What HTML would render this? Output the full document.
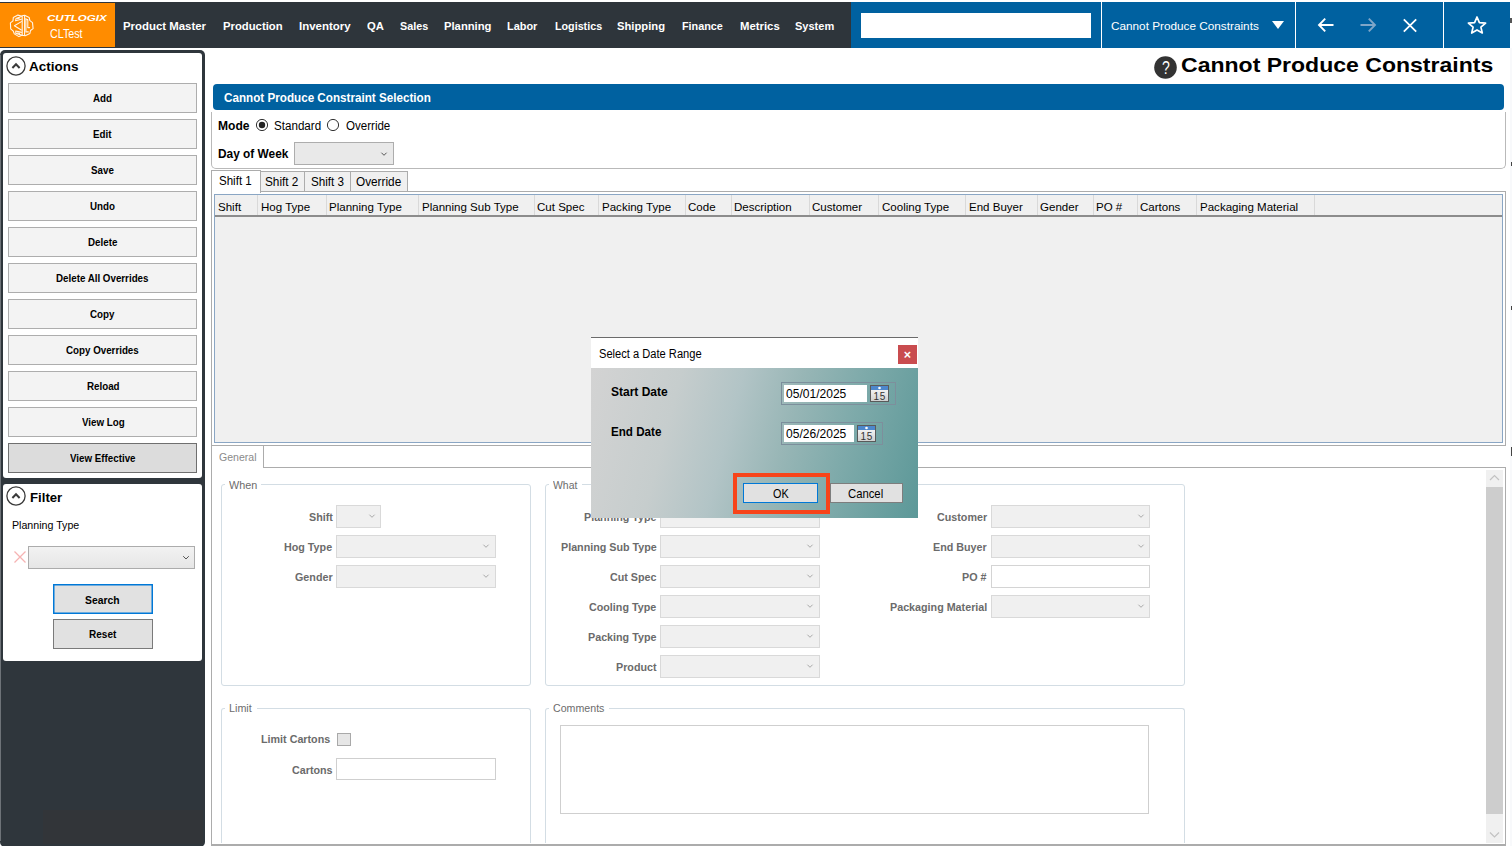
<!DOCTYPE html><html><head><meta charset="utf-8"><style>
*{margin:0;padding:0;box-sizing:border-box}
html,body{width:1512px;height:846px;overflow:hidden;background:#fff;position:relative;font-family:"Liberation Sans",sans-serif}
.a{position:absolute}
.t{position:absolute;white-space:nowrap;transform-origin:0 0;font-family:"Liberation Sans",sans-serif}
svg{position:absolute;overflow:visible}
</style></head><body>
<div class="a " style="left:0px;top:2px;width:851px;height:46px;background:#2e353b"></div>
<div class="a " style="left:0px;top:3px;width:115px;height:44px;background:#ff8c00"></div>
<div class="a " style="left:851px;top:2px;width:659px;height:46px;background:#0061a0"></div>
<div class="a " style="left:1101px;top:2px;width:1px;height:46px;background:#fff"></div>
<div class="a " style="left:1295px;top:2px;width:1px;height:46px;background:#fff"></div>
<div class="a " style="left:1443px;top:2px;width:1px;height:46px;background:#fff"></div>
<div class="a " style="left:861px;top:12.5px;width:229.5px;height:25.5px;background:#fff"></div>
<div class="a " style="left:1510px;top:17.5px;width:2px;height:5.0px;background:#555"></div>
<svg style="left:10px;top:14px" width="24" height="24" viewBox="0 0 24 24" fill="none" stroke="#fff" stroke-width="1.1" stroke-linejoin="round" stroke-linecap="round" opacity="0.92">
<path d="M3.3 3.6 L7.9 1.1 L11.2 2 L14.6 1.2 L19.2 3.6 L19.9 6.6 L22.5 8.6 L23.1 14.6 L20.5 16.5 L19.9 19.5 L15.2 21.8 L11.9 21.2 L8.9 22.6 L4.3 19.9 L3.3 17.2 L0.7 14.9 L0.4 8.9 L3 6.9 Z"/>
<path d="M12.2 2.2 L12.2 21 M14.6 1.6 L14.6 21.4"/>
<path d="M11.4 2.6 L6 4.6 L5.6 6.8 L11.3 5.2 M11.4 7.6 L4.4 11.8 L11.3 16 M11.4 18.4 L5.8 17 L5.8 19.4 L11.4 21"/>
<path d="M7.2 4.7 L9.5 4 M7.4 19 L9.6 19.4"/>
<path d="M15.9 4.2 L15.9 17.9 L18.3 17.9 M17 5.6 L17.8 5.6 L17.8 13.6 L19.6 13.6"/>
</svg>
<span class="t" style="left:47.00px;top:14px;font-size:9.3px;line-height:9.3px;color:#fff;font-weight:700;font-style:italic;transform:scaleX(1.2451);">CUTLOGIX</span>
<span class="t" style="left:50.00px;top:28px;font-size:12.4px;line-height:12.4px;color:#fff;transform:scaleX(0.8639);">CLTest</span>
<span class="t" style="left:123.30px;top:20px;font-size:11.6px;line-height:11.6px;color:#fff;font-weight:700;transform:scaleX(0.9837);">Product Master</span>
<span class="t" style="left:223.30px;top:20px;font-size:11.6px;line-height:11.6px;color:#fff;font-weight:700;transform:scaleX(0.9738);">Production</span>
<span class="t" style="left:298.90px;top:20px;font-size:11.6px;line-height:11.6px;color:#fff;font-weight:700;transform:scaleX(0.9898);">Inventory</span>
<span class="t" style="left:366.90px;top:20px;font-size:11.6px;line-height:11.6px;color:#fff;font-weight:700;transform:scaleX(0.9713);">QA</span>
<span class="t" style="left:400.00px;top:20px;font-size:11.6px;line-height:11.6px;color:#fff;font-weight:700;transform:scaleX(0.9313);">Sales</span>
<span class="t" style="left:444.00px;top:20px;font-size:11.6px;line-height:11.6px;color:#fff;font-weight:700;transform:scaleX(0.9699);">Planning</span>
<span class="t" style="left:507.40px;top:20px;font-size:11.6px;line-height:11.6px;color:#fff;font-weight:700;transform:scaleX(0.9421);">Labor</span>
<span class="t" style="left:554.70px;top:20px;font-size:11.6px;line-height:11.6px;color:#fff;font-weight:700;transform:scaleX(0.9258);">Logistics</span>
<span class="t" style="left:617.40px;top:20px;font-size:11.6px;line-height:11.6px;color:#fff;font-weight:700;transform:scaleX(0.9676);">Shipping</span>
<span class="t" style="left:681.80px;top:20px;font-size:11.6px;line-height:11.6px;color:#fff;font-weight:700;transform:scaleX(0.9332);">Finance</span>
<span class="t" style="left:739.70px;top:20px;font-size:11.6px;line-height:11.6px;color:#fff;font-weight:700;transform:scaleX(0.9789);">Metrics</span>
<span class="t" style="left:795.10px;top:20px;font-size:11.6px;line-height:11.6px;color:#fff;font-weight:700;transform:scaleX(0.9502);">System</span>
<span class="t" style="left:1111.00px;top:20px;font-size:11.6px;line-height:11.6px;color:#fff;transform:scaleX(1.0147);">Cannot Produce Constraints</span>
<svg style="left:1272px;top:21px" width="12" height="8" viewBox="0 0 12 8"><path d="M0 0 L12 0 L6 8 Z" fill="#fff"/></svg>
<svg style="left:1317px;top:17px" width="18" height="16" viewBox="0 0 18 16" fill="none" stroke="#fff" stroke-width="1.9"><path d="M2 8 L16.5 8 M8.2 1.6 L2 8 L8.2 14.4"/></svg>
<svg style="left:1359px;top:17px" width="18" height="16" viewBox="0 0 18 16" fill="none" stroke="#7fa6c8" stroke-width="1.9"><path d="M1.5 8 L16 8 M9.8 1.6 L16 8 L9.8 14.4"/></svg>
<svg style="left:1402px;top:18px" width="16" height="15" viewBox="0 0 16 15" fill="none" stroke="#fff" stroke-width="1.8"><path d="M1.8 1.4 L14.2 13.6 M14.2 1.4 L1.8 13.6"/></svg>
<svg style="left:1467px;top:16px" width="20" height="18" viewBox="0 0 20 18" fill="none" stroke="#fff" stroke-width="1.7" stroke-linejoin="round"><path d="M10 1 L12.4 6.6 L18.6 7.1 L13.9 11.1 L15.3 17 L10 13.9 L4.7 17 L6.1 11.1 L1.4 7.1 L7.6 6.6 Z"/></svg>
<div class="a " style="left:0px;top:50px;width:205px;height:796.5px;background:#2f363c;border-radius:5px"></div>
<div class="a " style="left:43px;top:809.5px;width:160px;height:34.5px;background:#323539"></div>
<div class="a " style="left:0px;top:55px;width:1px;height:786px;background:#6e7378"></div>
<div class="a " style="left:3px;top:53px;width:199px;height:425px;background:#fff;border-radius:3px"></div>
<div class="a " style="left:3px;top:484px;width:199px;height:177px;background:#fff;border-radius:3px"></div>
<svg style="left:5.699999999999999px;top:55.5px" width="20" height="20" viewBox="0 0 20 20" fill="none"><circle cx="10" cy="10" r="9.1" stroke="#3a3a3a" stroke-width="1.3"/><path d="M6.4 12 L10 8.3 L13.6 12" stroke="#3a3a3a" stroke-width="2"/></svg>
<span class="t" style="left:29.40px;top:60px;font-size:13.4px;line-height:13.4px;color:#000;font-weight:700;transform:scaleX(1.0071);">Actions</span>
<div class="a " style="left:8px;top:83px;width:189px;height:30px;background:#f3f3f3;border:1px solid #adadad"></div>
<span class="t" style="left:93.47px;top:94px;font-size:10.4px;line-height:10.4px;color:#000;font-weight:700;transform:scaleX(0.9400);">Add</span>
<div class="a " style="left:8px;top:119px;width:189px;height:30px;background:#f3f3f3;border:1px solid #adadad"></div>
<span class="t" style="left:93.32px;top:130px;font-size:10.4px;line-height:10.4px;color:#000;font-weight:700;transform:scaleX(0.9400);">Edit</span>
<div class="a " style="left:8px;top:155px;width:189px;height:30px;background:#f3f3f3;border:1px solid #adadad"></div>
<span class="t" style="left:91.29px;top:166px;font-size:10.4px;line-height:10.4px;color:#000;font-weight:700;transform:scaleX(0.9400);">Save</span>
<div class="a " style="left:8px;top:191px;width:189px;height:30px;background:#f3f3f3;border:1px solid #adadad"></div>
<span class="t" style="left:90.49px;top:202px;font-size:10.4px;line-height:10.4px;color:#000;font-weight:700;transform:scaleX(0.9400);">Undo</span>
<div class="a " style="left:8px;top:227px;width:189px;height:30px;background:#f3f3f3;border:1px solid #adadad"></div>
<span class="t" style="left:88.04px;top:238px;font-size:10.4px;line-height:10.4px;color:#000;font-weight:700;transform:scaleX(0.9400);">Delete</span>
<div class="a " style="left:8px;top:263px;width:189px;height:30px;background:#f3f3f3;border:1px solid #adadad"></div>
<span class="t" style="left:56.28px;top:274px;font-size:10.4px;line-height:10.4px;color:#000;font-weight:700;transform:scaleX(0.9400);">Delete All Overrides</span>
<div class="a " style="left:8px;top:299px;width:189px;height:30px;background:#f3f3f3;border:1px solid #adadad"></div>
<span class="t" style="left:90.49px;top:310px;font-size:10.4px;line-height:10.4px;color:#000;font-weight:700;transform:scaleX(0.9400);">Copy</span>
<div class="a " style="left:8px;top:335px;width:189px;height:30px;background:#f3f3f3;border:1px solid #adadad"></div>
<span class="t" style="left:66.33px;top:346px;font-size:10.4px;line-height:10.4px;color:#000;font-weight:700;transform:scaleX(0.9400);">Copy Overrides</span>
<div class="a " style="left:8px;top:371px;width:189px;height:30px;background:#f3f3f3;border:1px solid #adadad"></div>
<span class="t" style="left:86.68px;top:382px;font-size:10.4px;line-height:10.4px;color:#000;font-weight:700;transform:scaleX(0.9400);">Reload</span>
<div class="a " style="left:8px;top:407px;width:189px;height:30px;background:#f3f3f3;border:1px solid #adadad"></div>
<span class="t" style="left:81.62px;top:418px;font-size:10.4px;line-height:10.4px;color:#000;font-weight:700;transform:scaleX(0.9400);">View Log</span>
<div class="a " style="left:8px;top:443px;width:189px;height:30px;background:#dcdcdc;border:1px solid #6f6f6f"></div>
<span class="t" style="left:69.94px;top:454px;font-size:10.4px;line-height:10.4px;color:#000;font-weight:700;transform:scaleX(0.9400);">View Effective</span>
<svg style="left:5.699999999999999px;top:486.4px" width="20" height="20" viewBox="0 0 20 20" fill="none"><circle cx="10" cy="10" r="9.1" stroke="#3a3a3a" stroke-width="1.3"/><path d="M6.4 12 L10 8.3 L13.6 12" stroke="#3a3a3a" stroke-width="2"/></svg>
<span class="t" style="left:29.80px;top:491px;font-size:13.4px;line-height:13.4px;color:#000;font-weight:700;transform:scaleX(0.9843);">Filter</span>
<span class="t" style="left:11.80px;top:520px;font-size:11.2px;line-height:11.2px;color:#000;transform:scaleX(0.9507);">Planning Type</span>
<svg style="left:13px;top:550px" width="14" height="14" viewBox="0 0 14 14" fill="none" stroke="#f6b3b3" stroke-width="1.3"><path d="M1.5 1.5 L12.5 12.5 M12.5 1.5 L1.5 12.5"/></svg>
<div class="a " style="left:28px;top:546px;width:167px;height:23px;background:linear-gradient(#f2f2f2,#e6e6e6);border:1px solid #acacac"></div>
<svg style="left:181.5px;top:555px" width="8" height="6" viewBox="0 0 8 6" fill="none" stroke="#555" stroke-width="1"><path d="M1.2 1.2 L4 4 L6.8 1.2"/></svg>
<div class="a " style="left:53px;top:584px;width:100px;height:30px;background:#e1e1e1;border:1px solid #0078d7;box-shadow:inset 0 0 0 0.5px #0078d7"></div>
<span class="t" style="left:85.40px;top:595px;font-size:11.3px;line-height:11.3px;color:#000;font-weight:700;transform:scaleX(0.9158);">Search</span>
<div class="a " style="left:53px;top:619px;width:100px;height:30px;background:#e1e1e1;border:1px solid #7a7a7a"></div>
<span class="t" style="left:88.95px;top:629px;font-size:11.3px;line-height:11.3px;color:#000;font-weight:700;transform:scaleX(0.8869);">Reset</span>
<svg style="left:1154px;top:56px" width="23" height="23" viewBox="0 0 23 23"><circle cx="11.5" cy="11.5" r="11.3" fill="#333"/></svg>
<span class="t" style="left:1161.60px;top:59px;font-size:18.5px;line-height:18.5px;color:#fff;transform:scaleX(0.7600);">?</span>
<span class="t" style="left:1181.30px;top:56px;font-size:19.8px;line-height:19.8px;color:#000;font-weight:700;transform:scaleX(1.1642);">Cannot Produce Constraints</span>
<div class="a " style="left:213px;top:84px;width:1291px;height:26px;background:#0061a0;border-radius:4px"></div>
<span class="t" style="left:223.60px;top:92px;font-size:12.2px;line-height:12.2px;color:#fff;font-weight:700;transform:scaleX(0.9575);">Cannot Produce Constraint Selection</span>
<div class="a " style="left:211px;top:110px;width:1294.5px;height:58.5px;border:1px solid #b9b9b9;border-top:none;border-bottom-left-radius:5px;border-bottom-right-radius:5px;background:#fff"></div>
<div class="a " style="left:211px;top:110px;width:1.5px;height:2px;background:#fff"></div>
<div class="a " style="left:1504.5px;top:110px;width:1.0px;height:2px;background:#fff"></div>
<span class="t" style="left:217.80px;top:120px;font-size:12px;line-height:12px;color:#000;font-weight:700;transform:scaleX(1.0045);">Mode</span>
<svg style="left:255px;top:118px" width="14" height="14" viewBox="0 0 14 14"><circle cx="7" cy="7" r="5.6" fill="#fff" stroke="#333" stroke-width="1"/><circle cx="7" cy="7" r="3.2" fill="#222"/></svg>
<span class="t" style="left:274.10px;top:120px;font-size:12px;line-height:12px;color:#000;transform:scaleX(0.9682);">Standard</span>
<svg style="left:325.8px;top:118px" width="14" height="14" viewBox="0 0 14 14"><circle cx="7" cy="7" r="5.6" fill="#fff" stroke="#333" stroke-width="1"/></svg>
<span class="t" style="left:345.70px;top:120px;font-size:12px;line-height:12px;color:#000;transform:scaleX(0.9625);">Override</span>
<span class="t" style="left:217.80px;top:148px;font-size:12px;line-height:12px;color:#000;font-weight:700;transform:scaleX(0.9893);">Day of Week</span>
<div class="a " style="left:294px;top:142px;width:100px;height:23px;background:#e9e9e9;border:1px solid #adadad"></div>
<svg style="left:379px;top:149.5px" width="10" height="8" viewBox="0 0 10 8" fill="none" stroke="#555" stroke-width="1"><path d="M2.4 2.7 L5 5.3 L7.6 2.7"/></svg>
<div class="a " style="left:211px;top:191.3px;width:1294.5px;height:254.7px;border:1px solid #acacac;background:#fff"></div>
<div class="a " style="left:260px;top:171.4px;width:44.5px;height:20.6px;background:#f0f0f0;border:1px solid #acacac"></div>
<div class="a " style="left:304px;top:171.4px;width:46.5px;height:20.6px;background:#f0f0f0;border:1px solid #acacac"></div>
<div class="a " style="left:350px;top:171.4px;width:58px;height:20.6px;background:#f0f0f0;border:1px solid #acacac"></div>
<div class="a " style="left:211px;top:169.7px;width:50px;height:22.9px;background:#fff;border:1px solid #acacac;border-bottom:none"></div>
<span class="t" style="left:219.20px;top:175px;font-size:12.4px;line-height:12.4px;color:#000;transform:scaleX(0.9309);">Shift 1</span>
<span class="t" style="left:264.70px;top:176px;font-size:12.4px;line-height:12.4px;color:#000;transform:scaleX(0.9507);">Shift 2</span>
<span class="t" style="left:310.50px;top:176px;font-size:12.4px;line-height:12.4px;color:#000;transform:scaleX(0.9422);">Shift 3</span>
<span class="t" style="left:356.00px;top:176px;font-size:12.4px;line-height:12.4px;color:#000;transform:scaleX(0.9513);">Override</span>
<div class="a " style="left:214.2px;top:194px;width:1288.6px;height:249px;border:1px solid #8aa6c4;background:#f0f0f0"></div>
<div class="a " style="left:215.2px;top:214.5px;width:1286.6px;height:2.0px;background:#8c8c8c"></div>
<div class="a " style="left:257px;top:195px;width:1px;height:19.5px;background:#d9d9d9"></div>
<div class="a " style="left:326px;top:195px;width:1px;height:19.5px;background:#d9d9d9"></div>
<div class="a " style="left:417.8px;top:195px;width:1.0px;height:19.5px;background:#d9d9d9"></div>
<div class="a " style="left:533.7px;top:195px;width:1.0px;height:19.5px;background:#d9d9d9"></div>
<div class="a " style="left:598px;top:195px;width:1px;height:19.5px;background:#d9d9d9"></div>
<div class="a " style="left:685px;top:195px;width:1px;height:19.5px;background:#d9d9d9"></div>
<div class="a " style="left:731px;top:195px;width:1px;height:19.5px;background:#d9d9d9"></div>
<div class="a " style="left:808.7px;top:195px;width:1.0px;height:19.5px;background:#d9d9d9"></div>
<div class="a " style="left:878.4px;top:195px;width:1.0px;height:19.5px;background:#d9d9d9"></div>
<div class="a " style="left:965px;top:195px;width:1px;height:19.5px;background:#d9d9d9"></div>
<div class="a " style="left:1036.6px;top:195px;width:1.0px;height:19.5px;background:#d9d9d9"></div>
<div class="a " style="left:1093px;top:195px;width:1px;height:19.5px;background:#d9d9d9"></div>
<div class="a " style="left:1137px;top:195px;width:1px;height:19.5px;background:#d9d9d9"></div>
<div class="a " style="left:1195.5px;top:195px;width:1.0px;height:19.5px;background:#d9d9d9"></div>
<div class="a " style="left:1314px;top:195px;width:1px;height:19.5px;background:#d9d9d9"></div>
<span class="t" style="left:218.20px;top:201px;font-size:11.6px;line-height:11.6px;color:#000;transform:scaleX(0.9950);">Shift</span>
<span class="t" style="left:260.50px;top:201px;font-size:11.6px;line-height:11.6px;color:#000;transform:scaleX(0.9950);">Hog Type</span>
<span class="t" style="left:329.30px;top:201px;font-size:11.6px;line-height:11.6px;color:#000;transform:scaleX(0.9950);">Planning Type</span>
<span class="t" style="left:421.50px;top:201px;font-size:11.6px;line-height:11.6px;color:#000;transform:scaleX(0.9950);">Planning Sub Type</span>
<span class="t" style="left:536.80px;top:201px;font-size:11.6px;line-height:11.6px;color:#000;transform:scaleX(0.9950);">Cut Spec</span>
<span class="t" style="left:601.80px;top:201px;font-size:11.6px;line-height:11.6px;color:#000;transform:scaleX(0.9950);">Packing Type</span>
<span class="t" style="left:688.20px;top:201px;font-size:11.6px;line-height:11.6px;color:#000;transform:scaleX(0.9950);">Code</span>
<span class="t" style="left:734.20px;top:201px;font-size:11.6px;line-height:11.6px;color:#000;transform:scaleX(0.9950);">Description</span>
<span class="t" style="left:812.00px;top:201px;font-size:11.6px;line-height:11.6px;color:#000;transform:scaleX(0.9950);">Customer</span>
<span class="t" style="left:881.50px;top:201px;font-size:11.6px;line-height:11.6px;color:#000;transform:scaleX(0.9950);">Cooling Type</span>
<span class="t" style="left:968.50px;top:201px;font-size:11.6px;line-height:11.6px;color:#000;transform:scaleX(0.9950);">End Buyer</span>
<span class="t" style="left:1039.70px;top:201px;font-size:11.6px;line-height:11.6px;color:#000;transform:scaleX(0.9950);">Gender</span>
<span class="t" style="left:1096.40px;top:201px;font-size:11.6px;line-height:11.6px;color:#000;transform:scaleX(0.9950);">PO #</span>
<span class="t" style="left:1140.40px;top:201px;font-size:11.6px;line-height:11.6px;color:#000;transform:scaleX(0.9950);">Cartons</span>
<span class="t" style="left:1199.60px;top:201px;font-size:11.6px;line-height:11.6px;color:#000;transform:scaleX(0.9950);">Packaging Material</span>
<div class="a " style="left:211px;top:467px;width:1294.5px;height:379px;border:1px solid #acacac;border-top:1px solid #acacac;border-bottom:2px solid #acacac;background:#fff"></div>
<div class="a " style="left:211px;top:446px;width:53px;height:22px;background:#fff;border-left:1px solid #acacac;border-right:1px solid #acacac"></div>
<span class="t" style="left:219.00px;top:452px;font-size:11.8px;line-height:11.8px;color:#8a8a8a;transform:scaleX(0.8948);">General</span>
<div class="a " style="left:1486px;top:470px;width:17px;height:17px;background:#f0f0f0"></div>
<div class="a " style="left:1486px;top:487px;width:17px;height:327px;background:#cdcdcd"></div>
<div class="a " style="left:1486px;top:814px;width:17px;height:28.5px;background:#f0f0f0"></div>
<svg style="left:1489px;top:474px" width="11" height="8" viewBox="0 0 11 8" fill="none" stroke="#c2c2c2" stroke-width="1.2"><path d="M1 6 L5.5 1.5 L10 6"/></svg>
<svg style="left:1489px;top:831px" width="11" height="8" viewBox="0 0 11 8" fill="none" stroke="#c2c2c2" stroke-width="1.2"><path d="M1 1.5 L5.5 6 L10 1.5"/></svg>
<div class="a " style="left:221px;top:484px;width:310px;height:201.6px;border:1px solid #d3dde4;border-radius:3px;"></div>
<div class="a " style="left:225px;top:478px;width:36.2px;height:10px;background:#fff"></div>
<span class="t" style="left:229.20px;top:480px;font-size:11.2px;line-height:11.2px;color:#6c6c6c;transform:scaleX(0.9654);">When</span>
<div class="a " style="left:545px;top:484px;width:640px;height:201.6px;border:1px solid #d3dde4;border-radius:3px;"></div>
<div class="a " style="left:549px;top:478px;width:33.4px;height:10px;background:#fff"></div>
<span class="t" style="left:553.20px;top:480px;font-size:11.2px;line-height:11.2px;color:#6c6c6c;transform:scaleX(0.9332);">What</span>
<div class="a " style="left:221px;top:708px;width:310px;height:135px;border:1px solid #d3dde4;border-radius:3px;border-bottom:none;border-bottom-left-radius:0;border-bottom-right-radius:0;"></div>
<div class="a " style="left:225px;top:702px;width:31.8px;height:10px;background:#fff"></div>
<span class="t" style="left:229.20px;top:703px;font-size:11.2px;line-height:11.2px;color:#6c6c6c;transform:scaleX(0.9628);">Limit</span>
<div class="a " style="left:545px;top:708px;width:640px;height:135px;border:1px solid #d3dde4;border-radius:3px;border-bottom:none;border-bottom-left-radius:0;border-bottom-right-radius:0;"></div>
<div class="a " style="left:549px;top:702px;width:60px;height:10px;background:#fff"></div>
<span class="t" style="left:553.20px;top:703px;font-size:11.2px;line-height:11.2px;color:#6c6c6c;transform:scaleX(0.9506);">Comments</span>
<span class="t" style="left:308.88px;top:512px;font-size:11.8px;line-height:11.8px;color:#6b6b6b;font-weight:700;transform:scaleX(0.9100);">Shift</span>
<div class="a " style="left:336.3px;top:505.2px;width:44.7px;height:22.5px;background:#f0f0f0;border:1px solid #d9d9d9"></div>
<svg style="left:366.5px;top:512.2px" width="10" height="8" viewBox="0 0 10 8" fill="none" stroke="#a8a8a8" stroke-width="1"><path d="M2.4 2.7 L5 5.3 L7.6 2.7"/></svg>
<span class="t" style="left:284.29px;top:542px;font-size:11.8px;line-height:11.8px;color:#6b6b6b;font-weight:700;transform:scaleX(0.9100);">Hog Type</span>
<div class="a " style="left:336.3px;top:535.3px;width:159.3px;height:22.5px;background:#f0f0f0;border:1px solid #d9d9d9"></div>
<svg style="left:481.1px;top:542.3px" width="10" height="8" viewBox="0 0 10 8" fill="none" stroke="#a8a8a8" stroke-width="1"><path d="M2.4 2.7 L5 5.3 L7.6 2.7"/></svg>
<span class="t" style="left:294.84px;top:572px;font-size:11.8px;line-height:11.8px;color:#6b6b6b;font-weight:700;transform:scaleX(0.9100);">Gender</span>
<div class="a " style="left:336.3px;top:565.2px;width:159.3px;height:22.5px;background:#f0f0f0;border:1px solid #d9d9d9"></div>
<svg style="left:481.1px;top:572.2px" width="10" height="8" viewBox="0 0 10 8" fill="none" stroke="#a8a8a8" stroke-width="1"><path d="M2.4 2.7 L5 5.3 L7.6 2.7"/></svg>
<span class="t" style="left:584.03px;top:512px;font-size:11.8px;line-height:11.8px;color:#6b6b6b;font-weight:700;transform:scaleX(0.9100);">Planning Type</span>
<div class="a " style="left:660px;top:505.2px;width:159.5px;height:22.5px;background:#f0f0f0;border:1px solid #d9d9d9"></div>
<svg style="left:805.0px;top:512.2px" width="10" height="8" viewBox="0 0 10 8" fill="none" stroke="#a8a8a8" stroke-width="1"><path d="M2.4 2.7 L5 5.3 L7.6 2.7"/></svg>
<span class="t" style="left:560.78px;top:542px;font-size:11.8px;line-height:11.8px;color:#6b6b6b;font-weight:700;transform:scaleX(0.9100);">Planning Sub Type</span>
<div class="a " style="left:660px;top:535.2px;width:159.5px;height:22.5px;background:#f0f0f0;border:1px solid #d9d9d9"></div>
<svg style="left:805.0px;top:542.2px" width="10" height="8" viewBox="0 0 10 8" fill="none" stroke="#a8a8a8" stroke-width="1"><path d="M2.4 2.7 L5 5.3 L7.6 2.7"/></svg>
<span class="t" style="left:610.07px;top:572px;font-size:11.8px;line-height:11.8px;color:#6b6b6b;font-weight:700;transform:scaleX(0.9100);">Cut Spec</span>
<div class="a " style="left:660px;top:565.2px;width:159.5px;height:22.5px;background:#f0f0f0;border:1px solid #d9d9d9"></div>
<svg style="left:805.0px;top:572.2px" width="10" height="8" viewBox="0 0 10 8" fill="none" stroke="#a8a8a8" stroke-width="1"><path d="M2.4 2.7 L5 5.3 L7.6 2.7"/></svg>
<span class="t" style="left:589.41px;top:602px;font-size:11.8px;line-height:11.8px;color:#6b6b6b;font-weight:700;transform:scaleX(0.9100);">Cooling Type</span>
<div class="a " style="left:660px;top:595.2px;width:159.5px;height:22.5px;background:#f0f0f0;border:1px solid #d9d9d9"></div>
<svg style="left:805.0px;top:602.2px" width="10" height="8" viewBox="0 0 10 8" fill="none" stroke="#a8a8a8" stroke-width="1"><path d="M2.4 2.7 L5 5.3 L7.6 2.7"/></svg>
<span class="t" style="left:588.19px;top:632px;font-size:11.8px;line-height:11.8px;color:#6b6b6b;font-weight:700;transform:scaleX(0.9100);">Packing Type</span>
<div class="a " style="left:660px;top:625.2px;width:159.5px;height:22.5px;background:#f0f0f0;border:1px solid #d9d9d9"></div>
<svg style="left:805.0px;top:632.2px" width="10" height="8" viewBox="0 0 10 8" fill="none" stroke="#a8a8a8" stroke-width="1"><path d="M2.4 2.7 L5 5.3 L7.6 2.7"/></svg>
<span class="t" style="left:616.38px;top:662px;font-size:11.8px;line-height:11.8px;color:#6b6b6b;font-weight:700;transform:scaleX(0.9100);">Product</span>
<div class="a " style="left:660px;top:655.2px;width:159.5px;height:22.5px;background:#f0f0f0;border:1px solid #d9d9d9"></div>
<svg style="left:805.0px;top:662.2px" width="10" height="8" viewBox="0 0 10 8" fill="none" stroke="#a8a8a8" stroke-width="1"><path d="M2.4 2.7 L5 5.3 L7.6 2.7"/></svg>
<span class="t" style="left:936.52px;top:512px;font-size:11.8px;line-height:11.8px;color:#6b6b6b;font-weight:700;transform:scaleX(0.9100);">Customer</span>
<div class="a " style="left:990.5px;top:505.2px;width:159.5px;height:22.5px;background:#f0f0f0;border:1px solid #d9d9d9"></div>
<svg style="left:1135.5px;top:512.2px" width="10" height="8" viewBox="0 0 10 8" fill="none" stroke="#a8a8a8" stroke-width="1"><path d="M2.4 2.7 L5 5.3 L7.6 2.7"/></svg>
<span class="t" style="left:932.94px;top:542px;font-size:11.8px;line-height:11.8px;color:#6b6b6b;font-weight:700;transform:scaleX(0.9100);">End Buyer</span>
<div class="a " style="left:990.5px;top:535.2px;width:159.5px;height:22.5px;background:#f0f0f0;border:1px solid #d9d9d9"></div>
<svg style="left:1135.5px;top:542.2px" width="10" height="8" viewBox="0 0 10 8" fill="none" stroke="#a8a8a8" stroke-width="1"><path d="M2.4 2.7 L5 5.3 L7.6 2.7"/></svg>
<span class="t" style="left:962.14px;top:572px;font-size:11.8px;line-height:11.8px;color:#6b6b6b;font-weight:700;transform:scaleX(0.9100);">PO #</span>
<div class="a " style="left:990.5px;top:565.2px;width:159.5px;height:22.5px;background:#fff;border:1px solid #d4d4d4"></div>
<span class="t" style="left:890.00px;top:602px;font-size:11.8px;line-height:11.8px;color:#6b6b6b;font-weight:700;transform:scaleX(0.9100);">Packaging Material</span>
<div class="a " style="left:990.5px;top:595.2px;width:159.5px;height:22.5px;background:#f0f0f0;border:1px solid #d9d9d9"></div>
<svg style="left:1135.5px;top:602.2px" width="10" height="8" viewBox="0 0 10 8" fill="none" stroke="#a8a8a8" stroke-width="1"><path d="M2.4 2.7 L5 5.3 L7.6 2.7"/></svg>
<span class="t" style="left:261.11px;top:734px;font-size:11.8px;line-height:11.8px;color:#6b6b6b;font-weight:700;transform:scaleX(0.9100);">Limit Cartons</span>
<div class="a " style="left:337.4px;top:732.8px;width:13.6px;height:13.0px;background:#e6e6e6;border:1px solid #a9a9a9"></div>
<span class="t" style="left:292.44px;top:765px;font-size:11.8px;line-height:11.8px;color:#6b6b6b;font-weight:700;transform:scaleX(0.9100);">Cartons</span>
<div class="a " style="left:336px;top:757.8px;width:159.5px;height:22.5px;background:#fff;border:1px solid #cfcfcf"></div>
<div class="a " style="left:559.8px;top:724.7px;width:589.5px;height:89.7px;background:#fff;border:1px solid #cfcfcf"></div>
<div class="a " style="left:591px;top:337px;width:327px;height:1px;background:#6b6b6b"></div>
<div class="a " style="left:591px;top:338px;width:327px;height:30px;background:#fff"></div>
<span class="t" style="left:599.20px;top:348px;font-size:12.3px;line-height:12.3px;color:#000;transform:scaleX(0.9046);">Select a Date Range</span>
<div class="a " style="left:897.8px;top:345px;width:19.0px;height:19px;background:#c94c4f"></div>
<span class="t" style="left:903.80px;top:349px;font-size:12.5px;line-height:12.5px;color:#fff;font-weight:700;">×</span>
<div class="a " style="left:591px;top:368px;width:327px;height:149.5px;background:linear-gradient(105deg,#d3d3d3 0%,#c6cdcd 25%,#b2c4c6 42%,#98b6b6 58%,#7eaaaa 75%,#5c9898 100%)"></div>
<span class="t" style="left:611.25px;top:386px;font-size:12.6px;line-height:12.6px;color:#000;font-weight:700;transform:scaleX(0.9532);">Start Date</span>
<span class="t" style="left:611.25px;top:426px;font-size:12.6px;line-height:12.6px;color:#000;font-weight:700;transform:scaleX(0.9235);">End Date</span>
<svg width="0" height="0" style="position:absolute"><defs><linearGradient id="cg" x1="0" y1="0" x2="0" y2="1"><stop offset="0" stop-color="#fff"/><stop offset="1" stop-color="#cfcfcf"/></linearGradient></defs></svg>
<div class="a " style="left:781px;top:382px;width:115px;height:22.6px;border:1px solid #7d8f9c"></div>
<div class="a " style="left:784px;top:385px;width:83px;height:17px;background:#fff"></div>
<span class="t" style="left:785.90px;top:388px;font-size:12.2px;line-height:12.2px;color:#000;transform:scaleX(0.9883);">05/01/2025</span>
<svg style="left:870.4px;top:385.2px" width="19" height="17" viewBox="0 0 19 17">
<rect x="0.5" y="0.5" width="18" height="16" fill="url(#cg)" stroke="#5a5a5a" stroke-width="1"/>
<rect x="1" y="1" width="17" height="4" fill="#4d87cc"/>
<circle cx="9.5" cy="3" r="1.3" fill="#fff"/>
<text x="9.7" y="15.2" font-family="Liberation Sans" font-size="10" letter-spacing="0.6" text-anchor="middle" fill="#333">15</text>
</svg>
<div class="a " style="left:781px;top:422px;width:101.6px;height:22.6px;border:1px solid #7d8f9c"></div>
<div class="a " style="left:784px;top:425px;width:70px;height:17px;background:#fff"></div>
<span class="t" style="left:785.90px;top:428px;font-size:12.2px;line-height:12.2px;color:#000;transform:scaleX(0.9883);">05/26/2025</span>
<svg style="left:857px;top:425.2px" width="19" height="17" viewBox="0 0 19 17">
<rect x="0.5" y="0.5" width="18" height="16" fill="url(#cg)" stroke="#5a5a5a" stroke-width="1"/>
<rect x="1" y="1" width="17" height="4" fill="#4d87cc"/>
<circle cx="9.5" cy="3" r="1.3" fill="#fff"/>
<text x="9.7" y="15.2" font-family="Liberation Sans" font-size="10" letter-spacing="0.6" text-anchor="middle" fill="#333">15</text>
</svg>
<div class="a " style="left:743.2px;top:483.2px;width:74.5px;height:20.1px;background:#e1e1e1;border:1px solid #0078d7"></div>
<span class="t" style="left:772.80px;top:488px;font-size:12.2px;line-height:12.2px;color:#000;transform:scaleX(0.8867);">OK</span>
<div class="a " style="left:830px;top:483.2px;width:72.5px;height:20.1px;background:#e1e1e1;border:1px solid #7d7d7d"></div>
<span class="t" style="left:848.00px;top:488px;font-size:12.2px;line-height:12.2px;color:#000;transform:scaleX(0.9267);">Cancel</span>
<div class="a " style="left:732.8px;top:472.8px;width:97.2px;height:41.2px;border:4.5px solid #f7441a"></div>
<div class="a " style="left:1510px;top:48px;width:2px;height:798px;background:#f8f9fb"></div>
<div class="a " style="left:1511px;top:161.8px;width:1px;height:4.2px;background:#444"></div>
<div class="a " style="left:1511px;top:305.6px;width:1px;height:4.4px;background:#444"></div>
<div class="a " style="left:1511px;top:447px;width:1px;height:9px;background:#444"></div>
</body></html>
